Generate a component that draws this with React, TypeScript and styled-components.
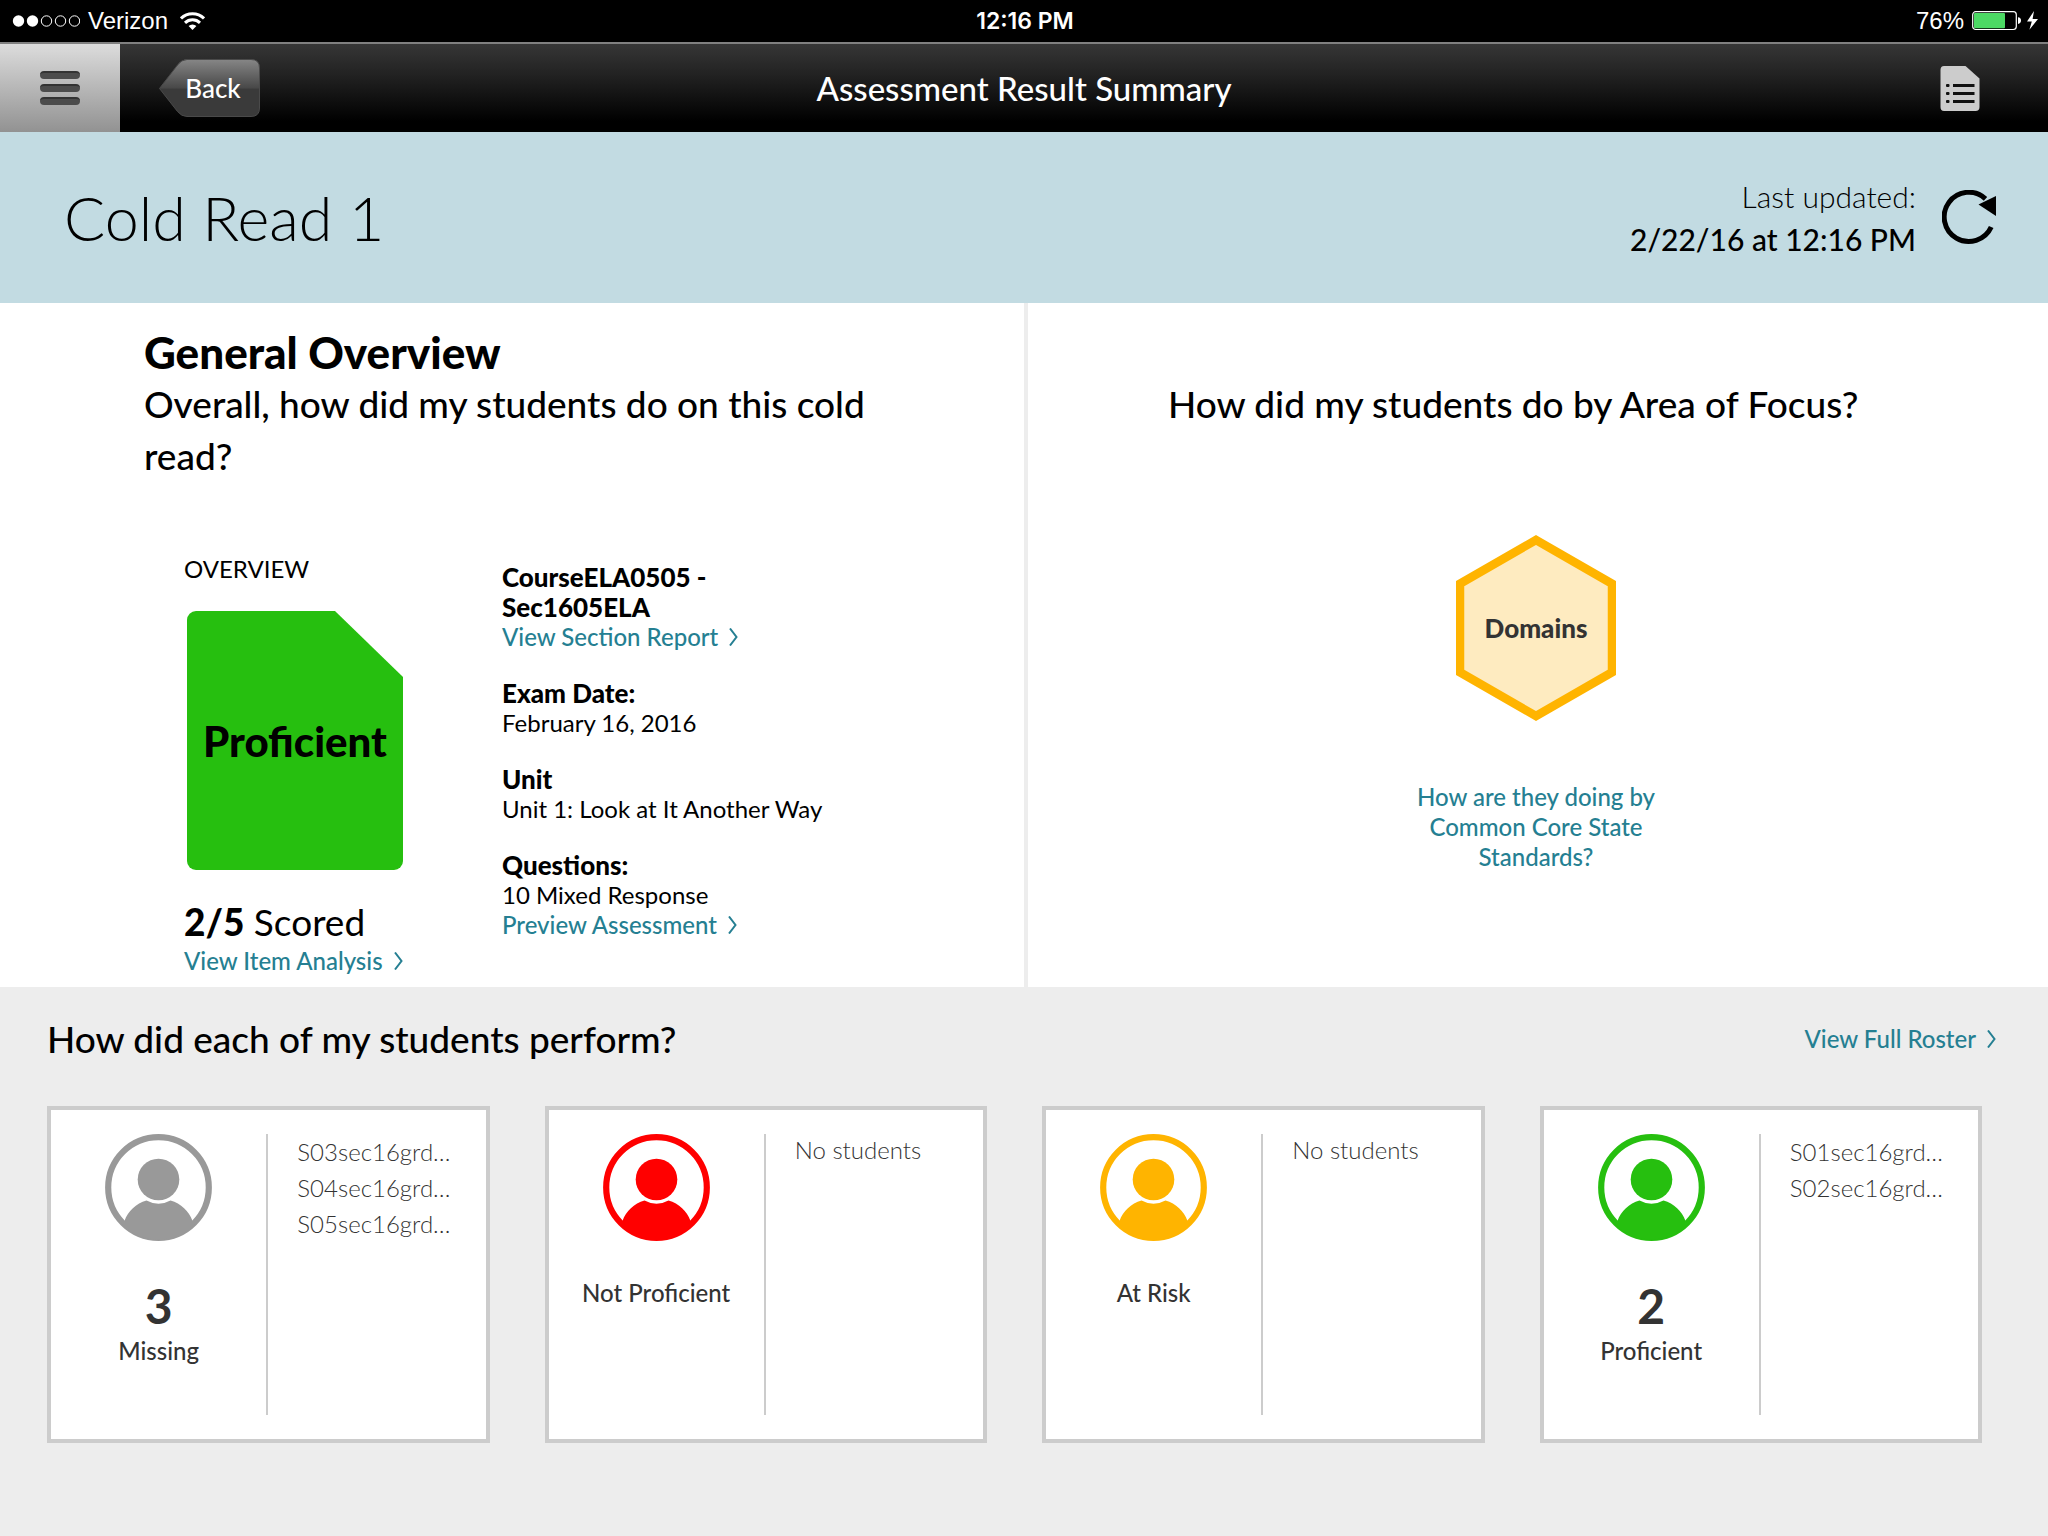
import React from "react";
import styled, { createGlobalStyle } from "styled-components";

const medium = `font-family: "Lato Medium", Lato, sans-serif; font-weight: 500;`;
const black = `font-family: "Lato Black", Lato, sans-serif; font-weight: 900;`;

const GlobalStyle = createGlobalStyle`
  * { box-sizing: border-box; }
  body {
    margin: 0;
    background: #ededed;
    color: #000;
    font-family: Lato, "Open Sans", sans-serif;
    font-size: 24px;
    line-height: 30px;
  }
  h1, h2, h3, p, ul, dl, dd, dt { margin: 0; padding: 0; font-size: inherit; font-weight: inherit; }
  ul { list-style: none; }
  button { border: 0; padding: 0; background: none; font: inherit; color: inherit; cursor: pointer; }
  svg { display: block; flex: none; }
`;

const Page = styled.div`
  display: flex;
  flex-direction: column;
  min-height: 100vh;
`;

const StatusBar = styled.div`
  display: grid;
  grid-template-columns: 1fr auto 1fr;
  align-items: center;
  height: 42px;
  padding: 0 10px 0 12px;
  background: #000;
  color: #fff;
  font-family: "Liberation Sans", Arial, sans-serif;
`;

const StatusGroup = styled.div<{ $end?: boolean }>`
  display: flex;
  align-items: center;
  justify-content: ${(p) => (p.$end ? "flex-end" : "flex-start")};
  gap: 8px;
`;

const Carrier = styled.span`
  padding-right: 4px;
`;

const Clock = styled.span`
  font-family: Inter, sans-serif;
  font-size: 23px;
  font-weight: 600;
`;

const NavBar = styled.header`
  display: grid;
  grid-template-columns: 1fr auto 1fr;
  height: 90px;
  border-top: 2px solid #808080;
  background: linear-gradient(#363636, #222 35%, #000 88%);
  color: #fff;
`;

const NavSide = styled.div<{ $end?: boolean }>`
  display: flex;
  align-items: center;
  justify-content: ${(p) => (p.$end ? "flex-end" : "flex-start")};
  gap: 39px;
  padding-right: ${(p) => (p.$end ? "68px" : "0")};
`;

const MenuButton = styled.button`
  display: flex;
  flex-direction: column;
  align-items: center;
  justify-content: center;
  gap: 5px;
  width: 120px;
  height: 100%;
  background: linear-gradient(#dcdcdc, #929292);
`;

const MenuLine = styled.span`
  width: 40px;
  height: 8px;
  border-radius: 4px;
  background: #4c4c4c;
  border-top: 2px solid #333;
`;

const BackButton = styled.button`
  position: relative;
  display: flex;
  align-items: center;
  justify-content: center;
  width: 101px;
  height: 58px;
  padding-left: 7px;
  ${medium}
  font-size: 26px;

  svg { position: absolute; inset: 0; }
  span { position: relative; }
`;

const NavTitle = styled.h1`
  align-self: center;
  ${medium}
  font-size: 33px;
  line-height: 44px;
`;

const Banner = styled.section`
  display: flex;
  align-items: center;
  justify-content: space-between;
  height: 171px;
  padding: 0 51px 0 64px;
  background: #c2dbe2;
`;

const BannerTitle = styled.h2`
  font-size: 61px;
  font-weight: 300;
  line-height: 72px;
`;

const Updated = styled.div`
  display: flex;
  align-items: center;
  gap: 26px;
  ${medium}
  text-align: right;
  font-size: 30px;
  line-height: 43px;
`;

const Light = styled.p`
  font-family: Lato, sans-serif;
  font-weight: 300;
`;

const Panels = styled.main`
  display: grid;
  grid-template-columns: 1fr 1fr;
  background: #fff;
`;

const OverviewPanel = styled.section`
  padding: 23px 120px 11px 144px;
`;

const Title = styled.h2`
  ${black}
  font-size: 44px;
  line-height: 52px;
`;

const Heading = styled.h2`
  ${medium}
  font-size: 37px;
  line-height: 52px;
`;

const OverviewBody = styled.div`
  display: flex;
  gap: 99px;
  margin-top: 72px;
  padding-left: 40px;
`;

const ScoreColumn = styled.div`
  display: flex;
  flex-direction: column;
`;

const LevelTile = styled.div`
  display: flex;
  align-items: center;
  justify-content: center;
  width: 216px;
  height: 259px;
  margin: 27px 0 28px 3px;
  border-radius: 9px;
  background: #26bf0f;
  clip-path: polygon(0 0, 148px 0, 100% 66px, 100% 100%, 0 100%);
  ${black}
  font-size: 42px;
`;

const Scored = styled.p`
  font-size: 37px;
  line-height: 48px;
  b { ${black} }
`;

const Link = styled.a`
  display: inline-flex;
  align-items: center;
  gap: 11px;
  color: #257f92;
  ${medium}
  text-decoration: none;
`;

const Details = styled.dl`
  display: flex;
  flex-direction: column;
  gap: 26px;
  width: 340px;
  padding-top: 8px;

  dt {
    ${black}
    font-size: 26px;
  }
`;

const FocusPanel = styled.section`
  display: flex;
  flex-direction: column;
  padding: 75px 0 11px;
  border-left: 4px solid #ededed;
`;

const FocusHeading = styled(Heading)`
  padding-left: 140px;
`;

const FocusBody = styled.div`
  display: flex;
  flex-direction: column;
  align-items: center;
  gap: 61px;
  margin-top: 105px;
  padding-right: 4px;
`;

const HexButton = styled.button`
  display: grid;
  place-items: center;
  color: #333;
  ${black}
  font-size: 26px;

  > * { grid-area: 1 / 1; }
`;

const StandardsLink = styled.a`
  width: 264px;
  color: #257f92;
  ${medium}
  text-align: center;
  text-decoration: none;
`;

const Roster = styled.section`
  flex: 1;
  padding: 26px 66px 40px 47px;
  background: #ededed;
`;

const RosterHead = styled.div`
  display: flex;
  align-items: center;
  justify-content: space-between;
  margin: 0 -14px 41px 0;
`;

const Cards = styled.div`
  display: grid;
  grid-template-columns: repeat(4, 1fr);
  gap: 55px;
`;

const Card = styled.article`
  display: grid;
  grid-template-columns: 1fr 1fr;
  padding: 24px 0;
  border: 4px solid #ccc;
  background: #fff;
  color: #333;
`;

const Group = styled.div`
  display: flex;
  flex-direction: column;
  align-items: center;
  min-height: 281px;
  border-right: 2px solid #ccc;
  ${medium}

  svg { margin-bottom: 37px; }
`;

const Count = styled.strong`
  margin-bottom: 2px;
  font-family: Lato, sans-serif;
  font-size: 48px;
  font-weight: 700;
  line-height: 56px;
`;

const Names = styled.ul`
  padding-left: 29px;
  font-weight: 300;
  line-height: 36px;
`;

const Empty = styled.p`
  padding-left: 29px;
  font-weight: 300;
  line-height: 32px;
`;

const Chevron = () => (
  <svg width="9" height="18" viewBox="0 0 9 18" fill="none" stroke="#257f92" strokeWidth="2" aria-hidden="true">
    <path d="M1 0.5 L7.5 9 L1 17.5" />
  </svg>
);

const Signal = () => (
  <svg width="68" height="14" viewBox="0 0 68 14" aria-hidden="true">
    {[0, 1, 2, 3, 4].map((i) => (
      <circle key={i} cx={6.5 + i * 14} cy="7" r={i < 2 ? 5.7 : 5.2} fill={i < 2 ? "#fff" : "none"} stroke="#fff" strokeWidth={i < 2 ? 0 : 1} />
    ))}
  </svg>
);

const Wifi = () => (
  <svg width="25" height="18" viewBox="0 0 25 18" fill="none" stroke="#fff" strokeWidth="3" aria-hidden="true">
    <path d="M1 6.4 A16.4 16.4 0 0 1 24 6.4" />
    <path d="M5 10.8 A10.8 10.8 0 0 1 20 10.8" />
    <path d="M12.5 18 L8.6 14.1 A5.6 5.6 0 0 1 16.4 14.1 Z" fill="#fff" stroke="none" />
  </svg>
);

const Battery = () => (
  <svg width="66" height="20" viewBox="0 0 66 20" aria-hidden="true">
    <rect x="0.7" y="0.7" width="43.6" height="17.8" rx="3" fill="none" stroke="#fff" strokeWidth="1.2" />
    <rect x="2" y="2" width="31" height="15.2" rx="1" fill="#4cd964" />
    <path d="M46 6.2 Q49 6.6 49 9.6 Q49 12.6 46 13 Z" fill="#fff" />
    <path d="M62 0 L55 10.4 L59.8 10.4 L57.4 18.8 L66 8 L60.6 8 Z" fill="#fff" />
  </svg>
);

const BackShape = () => (
  <svg width="101" height="58" viewBox="0 0 101 58" aria-hidden="true">
    <defs>
      <linearGradient id="back" x1="0" y1="0" x2="0" y2="1">
        <stop offset="0" stopColor="#868686" />
        <stop offset="0.5" stopColor="#484848" />
        <stop offset="0.52" stopColor="#3a3a3a" />
        <stop offset="1" stopColor="#3a3a3a" />
      </linearGradient>
    </defs>
    <path
      d="M28 0.5 H92 Q100.5 0.5 100.5 9 V49 Q100.5 57.5 92 57.5 H28 Q22.5 57.5 18.5 52.5 L0.5 29.5 L18.5 6 Q22.5 0.5 28 0.5 Z"
      fill="url(#back)"
      stroke="#4a4a4a"
    />
  </svg>
);

const ReportIcon = () => (
  <svg width="40" height="45" viewBox="0 0 40 45" aria-hidden="true">
    <path d="M4 0 H25.5 L39.5 12.5 V41 Q39.5 45 35.5 45 H4 Q0.5 45 0.5 41 V4 Q0.5 0 4 0 Z" fill="#ccc" />
    {[18, 26, 34].map((y) => (
      <g key={y} fill="#111">
        <rect x="6" y={y} width="3.5" height="3" rx="1" />
        <rect x="13" y={y} width="21.5" height="3" />
      </g>
    ))}
  </svg>
);

const RefreshIcon = () => (
  <svg width="55" height="55" viewBox="0 0 55 55" aria-hidden="true">
    <path d="M49.2 37 A24.6 24.6 0 1 1 43.5 8.8" fill="none" stroke="#000" strokeWidth="5" />
    <path d="M36.5 14.5 L54 6 V26 Z" />
  </svg>
);

const Hexagon = () => (
  <svg width="160" height="186" viewBox="0 0 160 186" aria-hidden="true">
    <path d="M80 5 L156 48.7 V137.3 L80 181 L4 137.3 V48.7 Z" fill="#feebc0" stroke="#ffb400" strokeWidth="8.5" />
  </svg>
);

const Person = ({ color }: { color: string }) => (
  <svg width="107" height="107" viewBox="0 0 107 107" aria-hidden="true">
    <circle cx="53.5" cy="53.5" r="50.3" fill="#fff" stroke={color} strokeWidth="6.2" />
    <circle cx="53.5" cy="45.5" r="20.8" fill={color} />
    <path
      d="M41.5 66.5 Q53.5 73 65.5 66.5 C76 69.5 84 77 87.5 87 L90 91 A53 53 0 0 1 17 91 L19.5 87 C23 77 31 69.5 41.5 66.5 Z"
      fill={color}
    />
  </svg>
);

type GroupData = { label: string; color: string; names: string[] };

const groups: GroupData[] = [
  { label: "Missing", color: "#999", names: ["S03sec16grd…", "S04sec16grd…", "S05sec16grd…"] },
  { label: "Not Proficient", color: "#f00", names: [] },
  { label: "At Risk", color: "#ffb400", names: [] },
  { label: "Proficient", color: "#26bf0f", names: ["S01sec16grd…", "S02sec16grd…"] },
];

const StudentCard = ({ label, color, names }: GroupData) => (
  <Card>
    <Group>
      <Person color={color} />
      {names.length > 0 && <Count>{names.length}</Count>}
      <span>{label}</span>
    </Group>
    {names.length > 0 ? (
      <Names>
        {names.map((name) => (
          <li key={name}>{name}</li>
        ))}
      </Names>
    ) : (
      <Empty>No students</Empty>
    )}
  </Card>
);

export default function App() {
  return (
    <Page>
      <GlobalStyle />
      <StatusBar>
        <StatusGroup>
          <Signal />
          <Carrier>Verizon</Carrier>
          <Wifi />
        </StatusGroup>
        <Clock>12:16 PM</Clock>
        <StatusGroup $end>
          <span>76%</span>
          <Battery />
        </StatusGroup>
      </StatusBar>

      <NavBar>
        <NavSide>
          <MenuButton aria-label="Menu">
            <MenuLine />
            <MenuLine />
            <MenuLine />
          </MenuButton>
          <BackButton>
            <BackShape />
            <span>Back</span>
          </BackButton>
        </NavSide>
        <NavTitle>Assessment Result Summary</NavTitle>
        <NavSide $end>
          <button aria-label="Report">
            <ReportIcon />
          </button>
        </NavSide>
      </NavBar>

      <Banner>
        <BannerTitle>Cold Read 1</BannerTitle>
        <Updated>
          <div>
            <Light>Last updated:</Light>
            <p>2/22/16 at 12:16 PM</p>
          </div>
          <button aria-label="Refresh">
            <RefreshIcon />
          </button>
        </Updated>
      </Banner>

      <Panels>
        <OverviewPanel>
          <Title>General Overview</Title>
          <Heading as="p">Overall, how did my students do on this cold read?</Heading>
          <OverviewBody>
            <ScoreColumn>
              <h3>OVERVIEW</h3>
              <LevelTile>Proficient</LevelTile>
              <Scored>
                <b>2/5</b> Scored
              </Scored>
              <Link href="#items">
                View Item Analysis
                <Chevron />
              </Link>
            </ScoreColumn>
            <Details>
              <div>
                <dt>CourseELA0505 - Sec1605ELA</dt>
                <dd>
                  <Link href="#section">
                    View Section Report
                    <Chevron />
                  </Link>
                </dd>
              </div>
              <div>
                <dt>Exam Date:</dt>
                <dd>February 16, 2016</dd>
              </div>
              <div>
                <dt>Unit</dt>
                <dd>Unit 1: Look at It Another Way</dd>
              </div>
              <div>
                <dt>Questions:</dt>
                <dd>10 Mixed Response</dd>
                <dd>
                  <Link href="#preview">
                    Preview Assessment
                    <Chevron />
                  </Link>
                </dd>
              </div>
            </Details>
          </OverviewBody>
        </OverviewPanel>

        <FocusPanel>
          <FocusHeading>How did my students do by Area of Focus?</FocusHeading>
          <FocusBody>
            <HexButton>
              <Hexagon />
              <span>Domains</span>
            </HexButton>
            <StandardsLink href="#standards">How are they doing by Common Core State Standards?</StandardsLink>
          </FocusBody>
        </FocusPanel>
      </Panels>

      <Roster>
        <RosterHead>
          <Heading>How did each of my students perform?</Heading>
          <Link href="#roster">
            View Full Roster
            <Chevron />
          </Link>
        </RosterHead>
        <Cards>
          {groups.map((group) => (
            <StudentCard key={group.label} {...group} />
          ))}
        </Cards>
      </Roster>
    </Page>
  );
}
